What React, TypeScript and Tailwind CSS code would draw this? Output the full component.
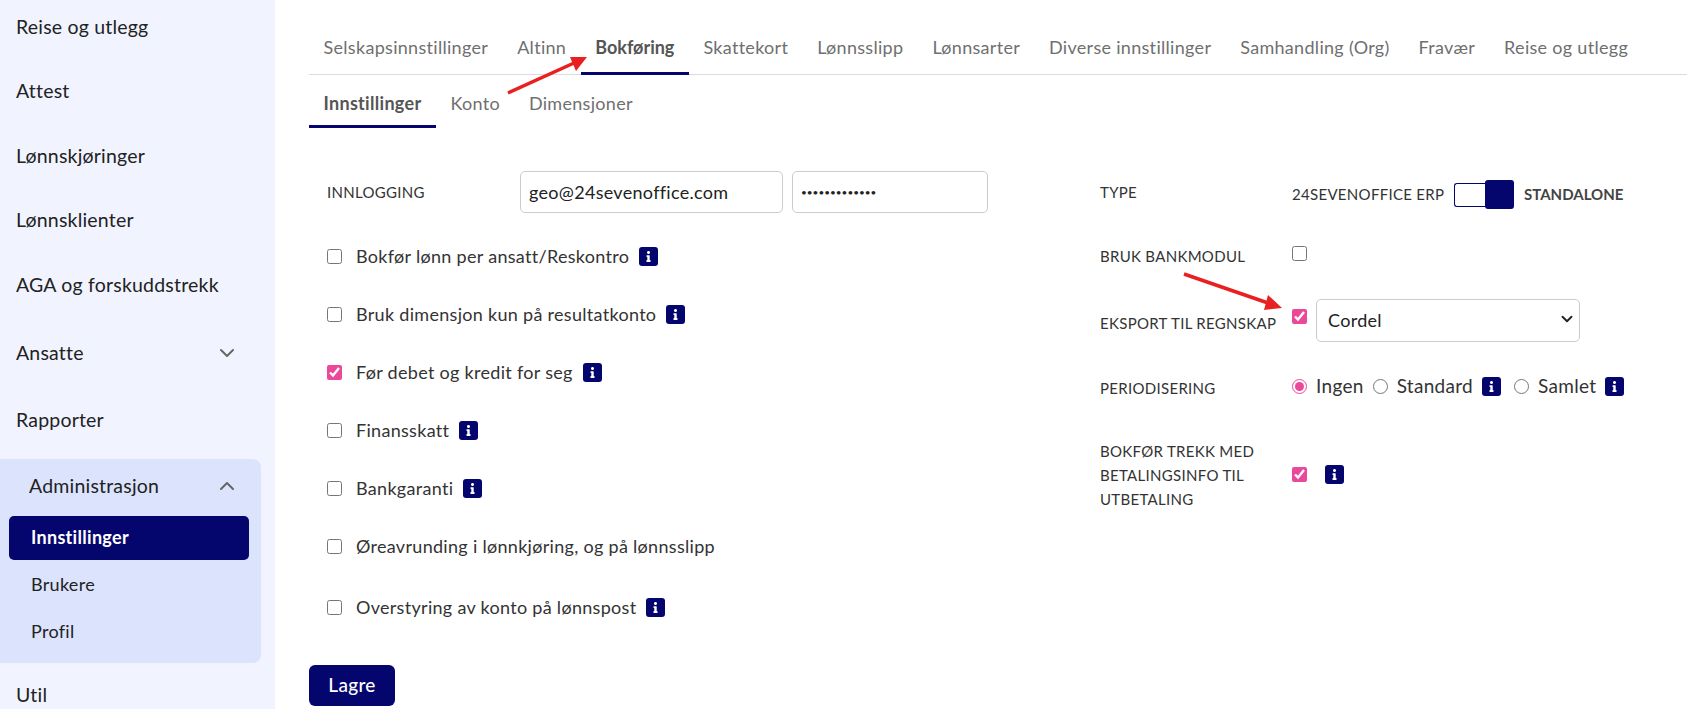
import React from "react";
import { ChevronDown, ChevronUp } from "lucide-react";
import { FaInfo } from "react-icons/fa";

const sidebarTop = ["Reise og utlegg", "Attest", "Lønnskjøringer", "Lønnsklienter", "AGA og forskuddstrekk"];
const mainTabs = ["Selskapsinnstillinger", "Altinn", "Bokføring", "Skattekort", "Lønnsslipp", "Lønnsarter", "Diverse innstillinger", "Samhandling (Org)", "Fravær", "Reise og utlegg"];
const subTabs = ["Innstillinger", "Konto", "Dimensjoner"];

const leftRows = [
    { label: "Bokfør lønn per ansatt/Reskontro", info: true, checked: false },
    { label: "Bruk dimensjon kun på resultatkonto", info: true, checked: false },
    { label: "Før debet og kredit for seg", info: true, checked: true },
    { label: "Finansskatt", info: true, checked: false },
    { label: "Bankgaranti", info: true, checked: false },
    { label: "Øreavrunding i lønnkjøring, og på lønnsslipp", info: false, checked: false },
];

const InfoBadge = () => (
    <span className="flex h-[19px] w-[19px] shrink-0 items-center justify-center rounded-[3px] bg-[#05056e] text-white">
        <FaInfo size={11} />
    </span>
);

const Check = ({ checked = false }: { checked?: boolean }) => (
    <input type="checkbox" defaultChecked={checked} className="h-[15px] w-[15px] shrink-0 accent-[#ec4899]" />
);

const Radio = ({ checked = false }: { checked?: boolean }) => (
    <input type="radio" name="periode" defaultChecked={checked} className="h-[15px] w-[15px] shrink-0 accent-[#ec4899]" />
);

const App: React.FC = () => {
    return (
        <div className="relative flex h-[709px] w-[1687px] overflow-hidden bg-white font-['Lato',sans-serif] text-[18px] tracking-[0.3px] text-[#333]">
            {/* Sidebar */}
            <aside className="h-full w-[275px] shrink-0 bg-[#f1f4ff] text-[19.5px] tracking-[0.2px] text-[#222]">
                <div className="-mt-[6px]">
                    {sidebarTop.map((item) => (
                        <div key={item} className="flex h-[64.5px] items-center pl-[16px]">{item}</div>
                    ))}
                </div>
                <div className="flex h-[72px] items-center justify-between pl-[16px] pr-[36px]">
                    Ansatte
                    <ChevronDown size={24} className="text-[#666]" />
                </div>
                <div className="flex h-[63px] items-center pl-[16px]">Rapporter</div>
                <div className="mt-[7px] h-[204px] w-[261px] rounded-r-lg bg-[#dce4fd]">
                    <div className="flex h-[57px] items-center justify-between pb-[2px] pl-[29px] pr-[22px]">
                        Administrasjon
                        <ChevronUp size={24} className="text-[#666]" />
                    </div>
                    <div className="mx-[9px] flex h-[44px] w-[240px] items-center rounded-[5px] bg-[#05056e] pl-[22px] text-[18px] font-bold tracking-[0.3px] text-white">
                        Innstillinger
                    </div>
                    <div className="flex h-[47px] items-center pl-[31px] pt-[2px] text-[18px] tracking-[0.3px]">Brukere</div>
                    <div className="flex h-[47px] items-center pl-[31px] pt-[2px] text-[18px] tracking-[0.3px]">Profil</div>
                </div>
                <div className="flex h-[64px] items-center pl-[16px]">Util</div>
            </aside>

            {/* Main */}
            <main className="flex-1 pl-[34px]">
                <nav className="flex h-[75px] items-end border-b border-[#dcdcdc] text-[#6f6f6f]">
                    {mainTabs.map((tab) => (
                        <div
                            key={tab}
                            className={`-mb-px flex h-[56px] items-center whitespace-nowrap border-b-[3px] px-[14.5px] pt-[4px] ${tab === "Bokføring" ? "border-[#05056e] font-bold tracking-normal text-[#555]" : "border-transparent"}`}
                        >
                            {tab}
                        </div>
                    ))}
                </nav>
                <nav className="flex h-[53px] text-[#6f6f6f]">
                    {subTabs.map((tab) => (
                        <div
                            key={tab}
                            className={`flex items-center whitespace-nowrap border-b-[3px] px-[14.5px] pt-[6px] ${tab === "Innstillinger" ? "border-[#05056e] font-bold text-[#555]" : "border-transparent"}`}
                        >
                            {tab}
                        </div>
                    ))}
                </nav>

                <div className="flex">
                    {/* Left column */}
                    <div className="w-[791px] pl-[18px] pt-[43px]">
                        <div className="flex h-[42px] items-center">
                            <span className="w-[193px] text-[15px] uppercase">Innlogging</span>
                            <input
                                readOnly
                                value="geo@24sevenoffice.com"
                                className="h-[42px] w-[263px] rounded-[5px] border border-[#ccc] px-[8px] text-[#222] outline-none"
                            />
                            <input
                                readOnly
                                type="password"
                                value="geo@24seven00"
                                className="ml-[9px] h-[42px] w-[196px] rounded-[5px] border border-[#ccc] px-[8px] text-[10px] tracking-normal text-[#222] outline-none"
                            />
                        </div>
                        <div className="mt-[14px]">
                            {leftRows.map((row) => (
                                <div key={row.label} className="flex h-[58px] items-center">
                                    <Check checked={row.checked} />
                                    <span className="ml-[14px] mr-[10px]">{row.label}</span>
                                    {row.info && <InfoBadge />}
                                </div>
                            ))}
                            <div className="flex h-[64px] items-center">
                                <Check />
                                <span className="ml-[14px] mr-[10px]">Overstyring av konto på lønnspost</span>
                                <InfoBadge />
                            </div>
                        </div>
                        <button className="-ml-[18px] mt-[26px] h-[41px] w-[86px] rounded-[6px] bg-[#05056e] text-[19px] font-medium text-white">
                            Lagre
                        </button>
                    </div>

                    {/* Right column */}
                    <div className="flex-1 pt-[43px] text-[15px]">
                        <div className="flex h-[42px] items-center">
                            <span className="w-[192px] uppercase">Type</span>
                            <span className="mt-[4px] w-[162px] whitespace-nowrap">24SEVENOFFICE ERP</span>
                            <span className="mt-[6px] h-[24px] w-[31px] rounded-l-[3px] border border-r-0 border-[#05056e]" />
                            <span className="mt-[5px] h-[29px] w-[29px] rounded-[3px] bg-[#05056e]" />
                            <span className="ml-[10px] mt-[4px] font-bold tracking-normal text-[#444]">STANDALONE</span>
                        </div>
                        <div className="mt-[32px] flex h-[22px] items-center">
                            <span className="w-[192px] uppercase">Bruk bankmodul</span>
                            <span className="-mt-[5px] flex"><Check /></span>
                        </div>
                        <div className="mt-[32px] flex h-[43px] items-center">
                            <span className="mt-[6px] w-[192px] whitespace-nowrap uppercase">Eksport til regnskap</span>
                            <span className="-mt-[8px] flex"><Check checked /></span>
                            <div className="relative ml-[9px] w-[264px]">
                                <select className="h-[43px] w-full appearance-none rounded-[5px] border border-[#ccc] bg-white pl-[11px] pr-[30px] text-[18px] text-[#222] outline-none">
                                    <option>Cordel</option>
                                </select>
                                <ChevronDown size={18} strokeWidth={2.5} className="pointer-events-none absolute right-[4px] top-[11px] text-[#222]" />
                            </div>
                        </div>
                        <div className="mt-[31px] flex h-[30px] items-center text-[19px]">
                            <span className="w-[192px] text-[15px] uppercase">Periodisering</span>
                            <span className="-mt-[3px] flex items-center">
                                <Radio checked />
                                <span className="ml-[9px] mr-[9px]">Ingen</span>
                                <Radio />
                                <span className="ml-[9px] mr-[9px]">Standard</span>
                                <InfoBadge />
                                <span className="ml-[13px] flex"><Radio /></span>
                                <span className="ml-[9px] mr-[9px]">Samlet</span>
                                <InfoBadge />
                            </span>
                        </div>
                        <div className="mt-[36px] flex items-center">
                            <span className="w-[192px] pr-[10px] uppercase leading-[24px]">Bokfør trekk med betalingsinfo til utbetaling</span>
                            <span className="-mt-[2px] flex items-center gap-[18px]">
                                <Check checked />
                                <InfoBadge />
                            </span>
                        </div>
                    </div>
                </div>
            </main>

            {/* Annotation arrows */}
            <svg className="pointer-events-none absolute left-0 top-0" width="1687" height="709">
                <path d="M508 93 L574 63" stroke="#e8201f" strokeWidth="3.5" />
                <polygon points="587,57 570,57 576,71" fill="#e8201f" />
                <path d="M1184 274 L1268 303" stroke="#e8201f" strokeWidth="3.5" />
                <polygon points="1282,308 1268,295 1264,310" fill="#e8201f" />
            </svg>
        </div>
    );
};

export default App;
